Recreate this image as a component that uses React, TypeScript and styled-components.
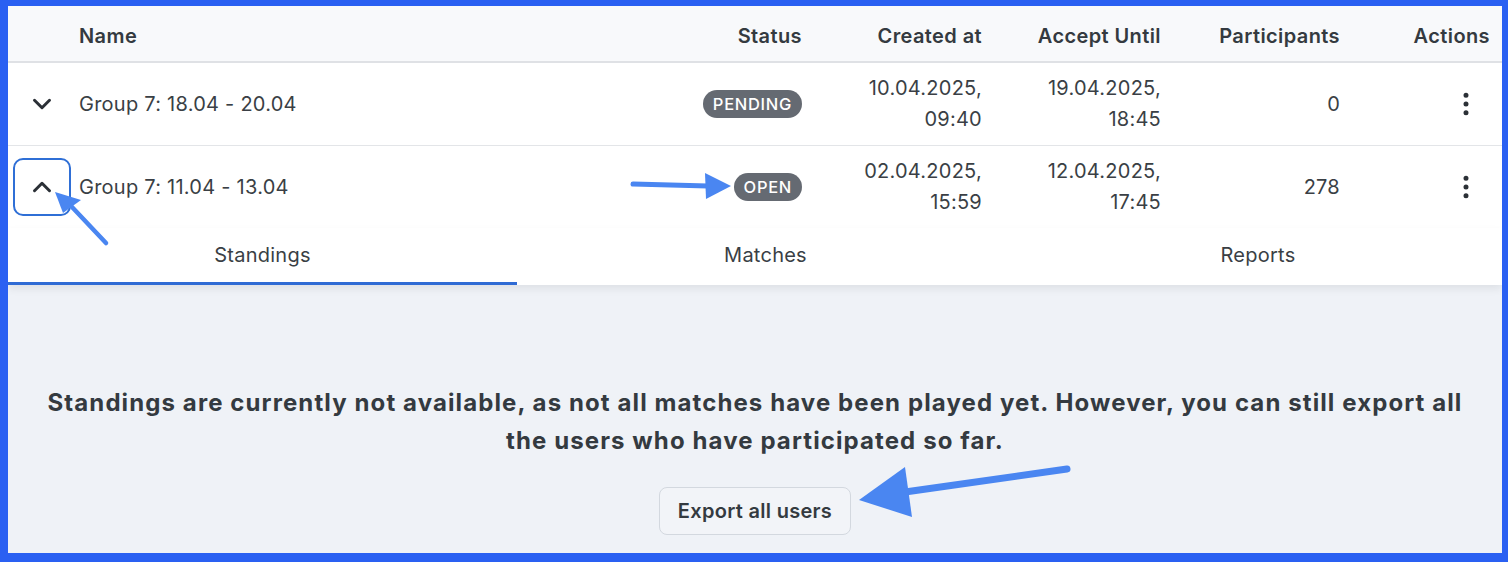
import styled, { createGlobalStyle } from 'styled-components';
import { ChevronDown, ChevronUp, EllipsisVertical } from 'lucide-react';

const GlobalStyle = createGlobalStyle`
  html, body {
    margin: 0;
    padding: 0;
    background: #2a60f2;
  }
  body {
    font-family: Inter, "Noto Sans", "Liberation Sans", sans-serif;
    color: #343a40;
  }
`;

type Group = {
  name: string;
  status: string;
  created: [string, string];
  until: [string, string];
  participants: number;
  open: boolean;
};

const groups: Group[] = [
  {
    name: 'Group 7: 18.04 - 20.04',
    status: 'Pending',
    created: ['10.04.2025,', '09:40'],
    until: ['19.04.2025,', '18:45'],
    participants: 0,
    open: false,
  },
  {
    name: 'Group 7: 11.04 - 13.04',
    status: 'Open',
    created: ['02.04.2025,', '15:59'],
    until: ['12.04.2025,', '17:45'],
    participants: 278,
    open: true,
  },
];

const tabs = ['Standings', 'Matches', 'Reports'];

const App: React.FC = () => {
  return (
    <Frame>
      <GlobalStyle />
      <Panel>
        <HeaderRow>
          <span />
          <HeadCell>Name</HeadCell>
          <HeadCell $right>Status</HeadCell>
          <HeadCell $right>Created at</HeadCell>
          <HeadCell $right>Accept Until</HeadCell>
          <HeadCell $right>Participants</HeadCell>
          <HeadCell $right>Actions</HeadCell>
        </HeaderRow>
        {groups.map((g, idx) => (
          <Row key={idx} $last={g.open}>
            <ExpandButton $focused={g.open}>
              {g.open ? (
                <ChevronUp size={30} strokeWidth={2.4} />
              ) : (
                <ChevronDown size={30} strokeWidth={2.4} />
              )}
            </ExpandButton>
            <Cell>{g.name}</Cell>
            <Cell $right>
              <Badge>{g.status}</Badge>
            </Cell>
            <Cell $right>
              <DateText>
                {g.created[0]}
                <br />
                {g.created[1]}
              </DateText>
            </Cell>
            <Cell $right>
              <DateText>
                {g.until[0]}
                <br />
                {g.until[1]}
              </DateText>
            </Cell>
            <Cell $right>{g.participants}</Cell>
            <Cell $right>
              <MenuButton>
                <EllipsisVertical size={30} strokeWidth={2} />
              </MenuButton>
            </Cell>
          </Row>
        ))}
        <TabBar>
          {tabs.map((t, idx) => (
            <Tab key={t} $active={idx === 0}>
              {t}
            </Tab>
          ))}
        </TabBar>
        <TabBody>
          <Message>
            Standings are currently not available, as not all matches have been
            played yet. However, you can still export all the users who have
            participated so far.
          </Message>
          <ExportButton>Export all users</ExportButton>
        </TabBody>
      </Panel>
      <Arrows width="1508" height="562" viewBox="0 0 1508 562">
        <g stroke="#4a86f1" strokeWidth="4.5" strokeLinecap="round" fill="#4a86f1">
          <line x1="106" y1="243" x2="72" y2="207" />
          <polygon points="55,192 81,200 63,213" stroke="none" />
          <line x1="633" y1="184" x2="708" y2="186" strokeWidth="5" />
          <polygon points="731,186 705,173 706,199" stroke="none" />
          <line x1="1067" y1="469" x2="905" y2="492" strokeWidth="7" />
          <polygon points="859,500 905,467 912,517" stroke="none" />
        </g>
      </Arrows>
    </Frame>
  );
};
export default App;

const Frame = styled.div`
  position: relative;
  width: 1508px;
  height: 562px;
  box-sizing: border-box;
  padding: 6px 6px 9px 8px;
  background: #2a60f2;
`;

const Panel = styled.div`
  height: 100%;
  display: flex;
  flex-direction: column;
  background: #ffffff;
  overflow: hidden;
`;

const gridCols = `
  display: grid;
  grid-template-columns: 71px 1fr 162px 180px 179px 179px 150px;
  padding-right: 12px;
  align-items: center;
`;

const HeaderRow = styled.div`
  ${gridCols}
  height: 55px;
  background: #f8f9fb;
  border-bottom: 2px solid #dfe1e5;
`;

const HeadCell = styled.div<{ $right?: boolean }>`
  font-size: 20px;
  font-weight: 600;
  letter-spacing: 0.4px;
  color: #343a40;
  text-align: ${(p) => (p.$right ? 'right' : 'left')};
  padding-top: 4px;
`;

const Row = styled.div<{ $last?: boolean }>`
  ${gridCols}
  height: 82px;
  border-bottom: ${(p) => (p.$last ? 'none' : '1px solid #e3e5e8')};
`;

const Cell = styled.div<{ $right?: boolean }>`
  font-size: 20px;
  letter-spacing: 0.25px;
  color: #3a3f45;
  text-align: ${(p) => (p.$right ? 'right' : 'left')};
  display: flex;
  justify-content: ${(p) => (p.$right ? 'flex-end' : 'flex-start')};
  align-items: center;
`;

const DateText = styled.span`
  line-height: 31px;
  text-align: right;
`;

const ExpandButton = styled.button<{ $focused?: boolean }>`
  width: 58px;
  height: 58px;
  margin-left: 5px;
  display: flex;
  align-items: center;
  justify-content: center;
  background: transparent;
  color: #2b3036;
  border: 2px solid ${(p) => (p.$focused ? '#2f6fd6' : 'transparent')};
  border-radius: 10px;
  padding: 0;
`;

const Badge = styled.span`
  display: inline-block;
  background: #656a72;
  color: #ffffff;
  font-size: 16.5px;
  font-weight: 500;
  text-transform: uppercase;
  letter-spacing: 0.7px;
  padding: 0 10px;
  height: 28px;
  line-height: 28px;
  border-radius: 14px;
`;

const MenuButton = styled.button`
  width: 48px;
  height: 48px;
  display: flex;
  align-items: center;
  justify-content: center;
  background: transparent;
  border: none;
  padding: 0;
  color: #2b3036;
`;

const TabBar = styled.div`
  display: grid;
  grid-template-columns: 509px 497px 1fr;
  height: 57px;
  background: #ffffff;
  box-shadow: 0 4px 8px rgba(0, 0, 0, 0.07);
  position: relative;
  z-index: 1;
`;

const Tab = styled.div<{ $active?: boolean }>`
  display: flex;
  align-items: center;
  justify-content: center;
  font-size: 20px;
  letter-spacing: 0.25px;
  color: #3a3f45;
  box-sizing: border-box;
  padding-bottom: ${(p) => (p.$active ? '1px' : '4px')};
  border-bottom: ${(p) => (p.$active ? '3px solid #2f6bd4' : 'none')};
`;

const TabBody = styled.div`
  flex: 1;
  background: #eff2f7;
  display: flex;
  flex-direction: column;
  align-items: center;
  padding-top: 99px;
`;

const Message = styled.p`
  margin: 0;
  padding: 0 30px;
  font-size: 24px;
  font-weight: 700;
  letter-spacing: 1.1px;
  line-height: 38px;
  text-align: center;
  color: #343a40;
`;

const ExportButton = styled.button`
  margin-top: 27px;
  height: 48px;
  padding: 0 18px;
  font-family: inherit;
  font-size: 20px;
  font-weight: 600;
  letter-spacing: 0.3px;
  color: #343a40;
  background: #f2f4f8;
  border: 1px solid #d3d8df;
  border-radius: 8px;
`;

const Arrows = styled.svg`
  position: absolute;
  top: 0;
  left: 0;
  z-index: 2;
  pointer-events: none;
`;
